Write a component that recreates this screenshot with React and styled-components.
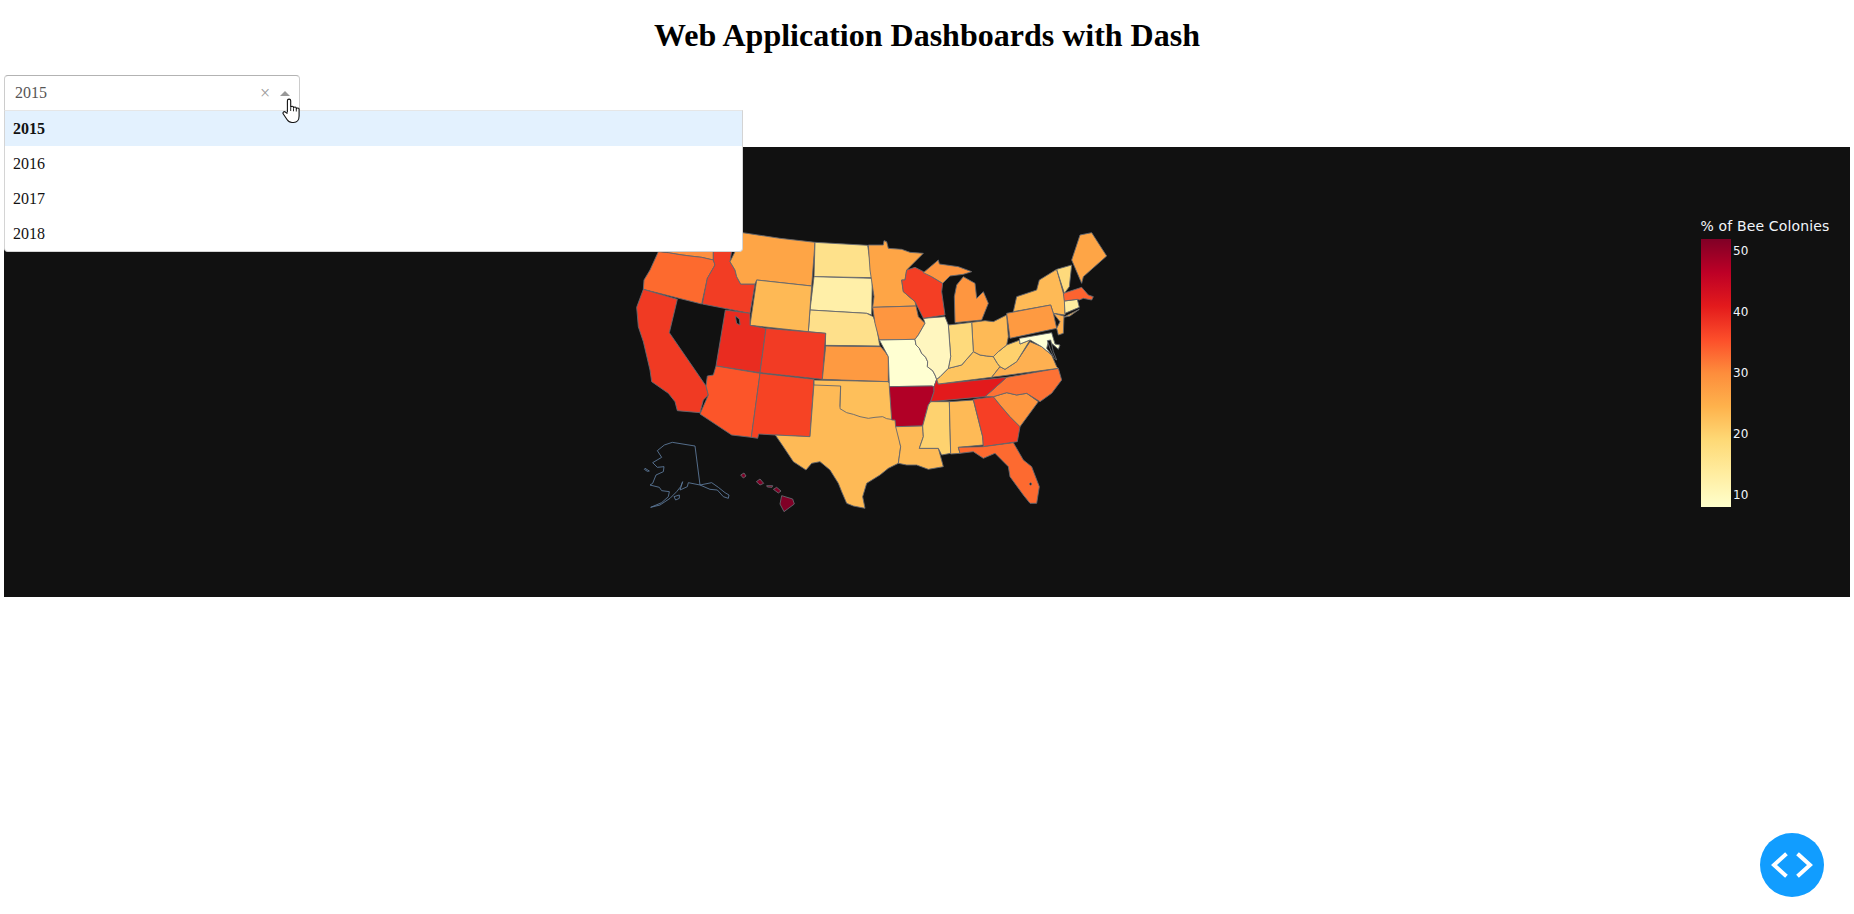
import React from 'react';
import styled, { createGlobalStyle } from 'styled-components';

const GlobalStyle = createGlobalStyle`
    html, body {
        margin: 0;
        padding: 0;
        background: #ffffff;
        font-family: "Liberation Serif", "Times New Roman", serif;
        overflow: hidden;
    }
`;

const Page = styled.div`
    display: flex;
    flex-direction: column;
    min-height: 914px;
    padding: 0 4px;
    box-sizing: border-box;
`;

const Title = styled.h1`
    margin: 0;
    height: 75px;
    padding-top: 14px;
    box-sizing: border-box;
    font-size: 32px;
    line-height: 42px;
    font-weight: 700;
    text-align: center;
    color: #000000;
`;

const Dropdown = styled.div`
    position: relative;
    width: 296px;
    height: 36px;
    margin-bottom: 36px;
`;

const Control = styled.div`
    display: flex;
    align-items: center;
    height: 36px;
    box-sizing: border-box;
    padding: 0 9px 0 10px;
    border: 1px solid #cccccc;
    border-color: #b3b3b3 #cccccc #d9d9d9;
    border-radius: 4px 4px 0 0;
    background: #ffffff;
`;

const Value = styled.span`
    flex: 1;
    font-size: 16px;
    color: #555555;
`;

const Clear = styled.span`
    width: 17px;
    font-size: 18px;
    line-height: 1;
    color: #999999;
`;

const Arrow = styled.span`
    width: 0;
    height: 0;
    margin-left: 3px;
    border: solid transparent;
    border-width: 0 5px 5px;
    border-bottom-color: #999999;
`;

const Menu = styled.div`
    position: absolute;
    z-index: 2;
    top: 35px;
    left: 0;
    width: 739px;
    height: 142px;
    box-sizing: border-box;
    border: 1px solid #d4d4d4;
    border-top-color: #e6e6e6;
    border-radius: 0 0 4px 4px;
    background: #ffffff;
`;

const Option = styled.div`
    height: 35px;
    padding-left: 8px;
    font-size: 16px;
    line-height: 36px;
    color: #111111;
    font-weight: ${props => (props.$selected ? 700 : 400)};
    background: ${props => (props.$selected ? '#e3f1fe' : 'transparent')};
`;

const Cursor = styled.svg`
    position: absolute;
    z-index: 3;
    left: 278px;
    top: 23px;
    width: 19px;
    height: 26px;
`;

const Figure = styled.svg`
    display: block;
    width: 1846px;
    height: 450px;
    background: #111111;
`;

const State = styled.polygon`
    stroke: ${props => (props.$fill === 'none' ? '#5b7797' : '#64686e')};
    stroke-width: 0.9;
    stroke-linejoin: round;
    vector-effect: non-scaling-stroke;
    fill: ${props => props.$fill};
`;

const BarTitle = styled.text`
    font-family: "DejaVu Sans", Verdana, sans-serif;
    font-size: 14px;
    letter-spacing: 0.15px;
    fill: #f2f5fa;
`;

const BarTick = styled.text`
    font-family: "DejaVu Sans", Verdana, sans-serif;
    font-size: 12px;
    fill: #f2f5fa;
`;

const DebugButton = styled.div`
    position: fixed;
    right: 30px;
    bottom: 17px;
    display: flex;
    align-items: center;
    justify-content: center;
    width: 64px;
    height: 64px;
    border-radius: 50%;
    background: #119dff;
`;

// rios compartilhados entre dois estados
const MISSISSIPPI = '168,375 178,385 185,400 197,412 203,425 202,440 218,452 225,465 230,478';
const OHIO = '265,445 285,440 305,435 318,420 340,395';

// coordenadas lidas do recorte a partir de (620,220), escala 3x
const WEST = [
    ['#fe9040', '145,60 280,60 280,120 245,112 210,108 180,104 145,98'],
    ['#fd6a2e', '115,95 145,98 180,104 210,108 245,112 280,120 285,135 262,175 245,252 70,208 72,180 90,150'],
    ['#f23d24', '280,60 340,60 330,125 345,150 350,170 362,192 405,192 390,280 247,252 262,175 285,135 280,120'],
    ['#fea546', '335,20 368,38 480,55 585,67 575,198 410,180 405,192 362,192 350,170 345,150 330,125 345,95'],
    ['#fee18b', '585,67 743,76 748,110 757,173 582,170'],
    ['#ffefa8', '582,170 757,175 755,285 740,280 570,270'],
    ['#fee08b', '570,270 740,280 760,290 770,320 778,370 780,378 616,376 617,340 565,335'],
    ['#feb955', '410,180 575,198 565,335 390,316'],
    ['#e92c20', '316,270 390,280 390,316 438,325 420,458 288,438'],
    ['#111111', '346,288 358,297 360,315 350,310'],
    ['#f23b24', '438,325 617,340 607,478 420,458'],
    ['#f03a23', '70,208 172,238 148,338 258,498 265,525 250,540 240,578 172,572 165,545 145,520 95,485 90,450 70,365 55,320 50,262'],
    ['#fc5529', '288,438 420,460 394,652 335,645 240,582 265,525 258,498 262,468 280,465'],
    ['#f64324', '420,460 582,478 570,650 466,645 416,642 413,655 394,652'],
    ['#feba56', '582,490 662,490 660,560 680,570 745,585 780,582 827,590 842,680 835,730 805,745 780,765 740,790 728,830 735,865 700,858 680,850 665,815 655,790 630,750 600,725 575,730 558,750 520,725 490,680 466,645 570,650'],
    ['#fe9a41', '617,378 782,380 795,395 805,410 805,485 607,478'],
    ['#febf5a', '582,480 805,485 815,500 827,600 800,596 788,590 765,592 745,595 720,590 700,583 680,578 660,566 662,498 582,495'],
];

// recorte a partir de (860,220), escala 3x
const EAST = [
    ['#fea546', '25,75 70,75 72,62 80,65 85,85 125,88 150,97 190,100 140,150 135,180 125,180 130,215 165,245 168,258 38,262 42,230 30,150'],
    ['#fe9640', '38,262 168,258 175,290 195,310 175,345 165,358 58,360 45,310'],
    ['#ffffd2', `58,360 165,358 ${MISSISSIPPI} 222,500 215,498 88,500 85,410`],
    ['#b10026', '88,500 215,498 222,500 222,515 212,545 205,555 188,618 107,620 105,600 95,600'],
    ['#feba56', '107,620 188,618 190,650 178,685 235,685 242,710 250,740 205,748 170,735 140,735 115,730 122,680'],
    ['#fed26f', '212,545 268,545 272,700 245,705 235,685 178,685 190,650 188,618 205,555'],
    ['#feba56', '268,545 340,540 368,650 370,675 295,682 300,700 272,702'],
    ['#f63f25', '340,538 400,530 420,555 450,590 480,620 472,665 370,680 368,650'],
    ['#fd6a30', '295,682 370,680 460,668 490,720 515,740 538,800 530,850 510,850 490,825 450,770 445,740 405,700 370,715 340,695 300,700'],
    ['#fe9640', '400,530 440,518 470,525 500,520 535,545 480,620 450,590 420,555'],
    ['#fd7235', '375,530 440,472 595,445 605,480 575,520 540,545 500,520 470,525 440,518 400,530'],
    ['#e31a1c', '222,500 230,478 235,492 440,472 375,530 212,545 222,515'],
    ['#fec560', `230,478 240,470 ${OHIO} 360,405 380,408 400,410 412,430 420,440 395,472 235,492`],
    ['#feb051', '395,472 420,440 435,448 470,425 510,365 545,380 575,405 590,440 595,445'],
    ['#fed16d', '400,410 415,395 440,375 480,360 480,372 510,360 470,425 435,448 420,440 412,430'],
    ['#feba56', '335,307 375,302 400,305 440,285 445,350 440,375 415,395 400,410 380,408 360,405 340,395'],
    ['#feda7c', '265,315 335,307 340,395 318,420 305,435 285,440 265,445 272,410'],
    ['#fff6bf', '190,295 255,290 265,315 272,410 265,445 240,470 230,478 225,465 218,452 202,440 203,425 197,412 185,400 178,385 168,375 165,358 175,345 195,310'],
    ['#f43e24', '140,150 165,142 185,152 215,170 248,190 245,215 255,285 190,295 165,245 130,215 125,180 135,180'],
    ['#fe9640', '290,195 310,170 345,190 350,235 370,215 385,250 365,300 285,308 283,230'],
    ['#fe9640', '190,158 235,120 238,132 295,140 335,155 310,163 270,168 248,190 215,170'],
    ['#feba56', '460,275 470,230 530,210 538,180 590,148 613,230 615,285 580,280 572,255'],
    ['#feba56', '610,292 658,268 630,288'],
    ['#fe9a41', '440,280 572,255 580,280 590,325 450,355'],
    ['#feb051', '580,280 612,288 610,340 595,345 590,325 600,305'],
    ['#ffffd5', '478,355 575,338 585,372 600,375 595,388 575,370 565,365 560,385 575,405 545,380 510,360 480,372'],
    ['#111111', '562,362 572,360 580,395 590,420 583,415 570,385'],
    ['#ffeda0', '613,243 652,238 658,262 615,280'],
    ['#fd6330', '610,220 665,202 685,225 700,230 695,240 670,235 658,240 652,238 613,243'],
    ['#feda7c', '590,148 635,135 628,200 613,220'],
    ['#fea546', '635,120 660,45 695,38 740,108 670,170 665,190'],
    ['#111111', '512,788 516,792 512,796 508,792'],
];

// recorte a partir de (630,430), escala 3x
const OFFSHORE = [
    ['none', '127,37 103,45 82,62 95,82 68,98 82,112 102,110 100,125 78,135 68,160 60,165 72,168 88,172 95,182 118,185 115,200 95,218 62,232 90,225 120,205 140,185 152,170 158,155 150,180 172,170 175,158 210,165 245,158 265,172 285,188 297,195 295,205 280,200 262,180 240,178 210,165 195,48'],
    ['none', '45,115 58,123 52,124 43,118'],
    ['none', '132,200 148,195 148,205 137,210'],
    ['#800026', '332,135 342,129 348,138 340,144'],
    ['#800026', '379,155 390,147 401,160 390,165'],
    ['#800026', '410,167 428,167 426,172 412,171'],
    ['#800026', '430,178 440,172 453,183 445,189'],
    ['#800026', '455,197 488,207 493,222 462,245 450,222'],
];

const RAMP = ['#ffffcc', '#ffeda0', '#fed976', '#feb24c', '#fd8d3c', '#fc4e2a', '#e31a1c', '#bd0026', '#800026'];
const TICKS = [[50, 104], [40, 165], [30, 226], [20, 287], [10, 348]];
const YEARS = [2015, 2016, 2017, 2018];

function Shapes({ items, x, y }) {
    return (
        <g transform={`translate(${x - 4} ${y - 147}) scale(${1 / 3})`}>
            {items.map(([fill, points]) => (
                <State key={points} $fill={fill} points={points} />
            ))}
        </g>
    );
}

export default function App() {
    return (
        <Page>
            <GlobalStyle />
            <Title>Web Application Dashboards with Dash</Title>

            <Dropdown>
                <Control>
                    <Value>2015</Value>
                    <Clear>×</Clear>
                    <Arrow />
                </Control>
                <Menu>
                    {YEARS.map(year => (
                        <Option key={year} $selected={year === 2015}>{year}</Option>
                    ))}
                </Menu>
                <Cursor viewBox="0 0 19 26">
                    <path
                        d="M5.4 14.5V2.8a1.65 1.65 0 0 1 3.3 0V9.5a1.4 1.4 0 0 1 2.8.2v.6a1.4 1.4 0 0 1 2.8.2v.8a1.4 1.4 0 0 1 2.8.3V18c0 3.5-2 6.5-5.5 6.5H10c-2.5 0-3.8-1.2-5-3L1.3 16c-1-1.5.6-3 2-2l2.1 1.6"
                        fill="#ffffff"
                        stroke="#111111"
                        strokeWidth="1.1"
                    />
                    <path d="M8.7 9.5v3.5M11.5 10.3v3M14.3 11v2.5" fill="none" stroke="#111111" strokeWidth="0.9" />
                </Cursor>
            </Dropdown>

            <Figure viewBox="0 0 1846 450">
                <defs>
                    <linearGradient id="ramp" x1="0" y1="1" x2="0" y2="0">
                        {RAMP.map((color, i) => (
                            <stop key={color} offset={i / (RAMP.length - 1)} stopColor={color} />
                        ))}
                    </linearGradient>
                </defs>
                <Shapes items={WEST} x={620} y={220} />
                <Shapes items={EAST} x={860} y={220} />
                <Shapes items={OFFSHORE} x={630} y={430} />
                <BarTitle x="1696.5" y="84">% of Bee Colonies</BarTitle>
                <rect x="1697" y="92" width="30" height="268" fill="url(#ramp)" />
                {TICKS.map(([label, y]) => (
                    <BarTick key={label} x="1729" y={y + 4}>{label}</BarTick>
                ))}
            </Figure>

            <DebugButton>
                <svg width="44" height="30" viewBox="0 0 44 30" fill="none" stroke="#ffffff" strokeWidth="4" strokeLinecap="square">
                    <path d="M15 5 4 15 15 25M29 5l11 10-11 10" />
                </svg>
            </DebugButton>
        </Page>
    );
}
